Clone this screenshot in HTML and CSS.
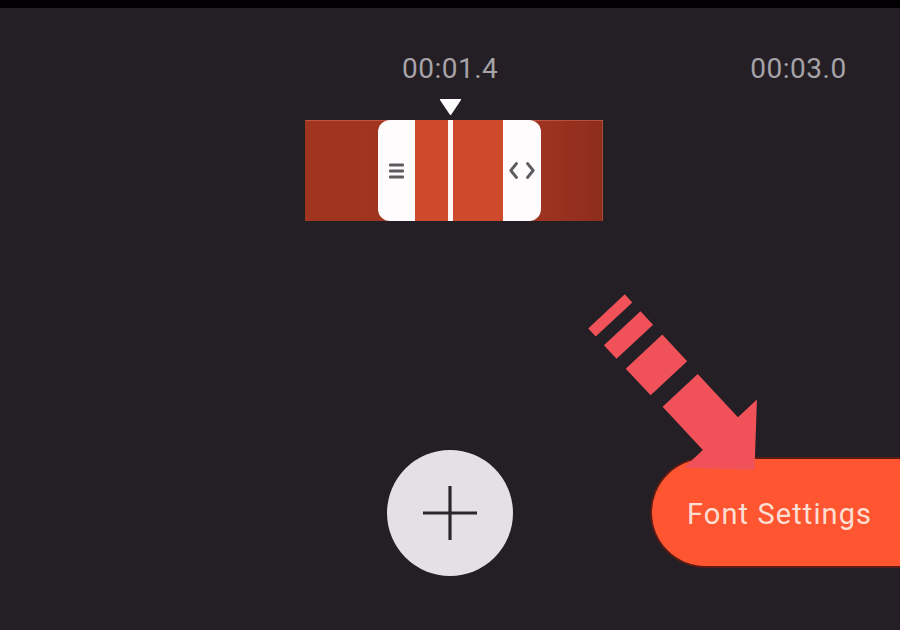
FILE: index.html
```html
<!DOCTYPE html>
<html lang="en">
<head>
<meta charset="utf-8">
<title>Text timeline</title>
<link rel="stylesheet" href="styles.css">
</head>
<body>
<div class="screen">
  <div class="statusbar"></div>
  <div class="ruler">
    <span class="time">00:01.4</span>
    <span class="time">00:03.0</span>
  </div>
  <svg class="marker" viewBox="0 0 23 18" width="23" height="18" aria-hidden="true">
    <path d="M1.5 1 L21.5 1 Q22.5 1 22 2 L12.3 16.6 Q11.5 17.6 10.7 16.6 L1 2 Q0.5 1 1.5 1 Z" fill="#fdfcfd"/>
  </svg>
  <div class="strip">
    <div class="clip">
      <div class="handle handle-left">
        <svg viewBox="0 0 15 16" width="15" height="16" aria-hidden="true">
          <rect x="0" y="0.5" width="15" height="3" rx="1" fill="#5c5b60"/>
          <rect x="0" y="6.5" width="15" height="3" rx="1" fill="#5c5b60"/>
          <rect x="0" y="12.5" width="15" height="3" rx="1" fill="#5c5b60"/>
        </svg>
      </div>
      <div class="segment seg-a"></div>
      <div class="cursor"></div>
      <div class="segment seg-b"></div>
      <div class="handle handle-right">
        <svg viewBox="0 0 26 17" width="26" height="17" aria-hidden="true">
          <polyline points="7.5,1.5 1.8,8.5 7.5,15.5" fill="none" stroke="#5c5b60" stroke-width="2.8" stroke-linecap="round" stroke-linejoin="round"/>
          <polyline points="18.5,1.5 24.2,8.5 18.5,15.5" fill="none" stroke="#5c5b60" stroke-width="2.8" stroke-linecap="round" stroke-linejoin="round"/>
        </svg>
      </div>
    </div>
  </div>
  <div class="actions">
    <button class="add" type="button" aria-label="Add">
      <svg viewBox="0 0 54 54" width="54" height="54" aria-hidden="true">
        <line x1="0.5" y1="27" x2="53.5" y2="27" stroke="#2b262b" stroke-width="3.2" stroke-linecap="round"/>
        <line x1="27" y1="0.5" x2="27" y2="53.5" stroke="#2b262b" stroke-width="3.2" stroke-linecap="round"/>
      </svg>
    </button>
    <button class="font-settings" type="button">Font Settings</button>
  </div>
  <svg class="pointer" viewBox="0 0 900 630" width="900" height="630" aria-hidden="true">
    <g transform="translate(606.5 311.4) rotate(47)" fill="#f15159">
      <rect x="0" y="-25" width="11" height="50"/>
      <rect x="23" y="-25" width="18.5" height="50"/>
      <rect x="55" y="-25" width="36.5" height="50"/>
      <polygon points="108,-24 167,-24 167,-50 217,0 167,50 167,24 108,24"/>
    </g>
  </svg>
</div>
</body>
</html>
```

FILE: styles.css
```css
html, body {
  margin: 0;
  padding: 0;
  background: #231f24;
}

body {
  width: 900px;
  height: 630px;
  overflow: hidden;
  font-family: Roboto, "Liberation Sans", sans-serif;
}

.screen {
  position: relative;
  width: 900px;
  height: 630px;
  overflow: hidden;
  background: #231f24;
}

.statusbar {
  height: 8px;
  background: #020002;
}

.ruler {
  display: flex;
  gap: 252px;
  padding-left: 402px;
  margin-top: 45px;
  height: 32px;
}

.time {
  font-size: 28px;
  line-height: 32px;
  letter-spacing: 0.5px;
  color: #a6a2a7;
  white-space: nowrap;
}

.marker {
  display: block;
  margin: 13px 0 0 439px;
}

.strip {
  width: 298px;
  height: 101px;
  margin: 4px 0 0 305px;
  box-sizing: border-box;
  background: linear-gradient(to right, #a0351f 0%, #9d3320 80%, #8d2d1c 100%);
  box-shadow: inset 0 1px 0 rgba(230, 120, 95, 0.45), inset -1px 0 0 rgba(230, 120, 95, 0.35);
  padding-left: 73px;
  display: flex;
}

.clip {
  display: flex;
  height: 101px;
}

.handle {
  background: #fefcfd;
  display: flex;
  align-items: center;
  justify-content: center;
}

.handle-left {
  width: 37px;
  border-radius: 12px 0 0 12px;
}

.handle-right {
  width: 38px;
  border-radius: 0 12px 12px 0;
}

.segment {
  background: #cf4a2c;
}

.seg-a {
  width: 33px;
}

.seg-b {
  width: 50px;
}

.cursor {
  width: 5px;
  background: #fdf6f4;
}

.actions {
  display: flex;
  align-items: center;
  margin-top: 229px;
  padding-left: 387px;
}

.add {
  width: 126px;
  height: 126px;
  border: 0;
  padding: 0;
  border-radius: 50%;
  background: #e5e0e6;
  display: flex;
  align-items: center;
  justify-content: center;
  flex: none;
}

.font-settings {
  margin-left: 137px;
  margin-top: -1px;
  width: 290px;
  height: 111px;
  flex: none;
  box-sizing: border-box;
  border: 2px solid #5a1c14;
  border-right: 0;
  border-radius: 56px 0 0 56px;
  background: #ff5631;
  color: #fcded3;
  font-family: Roboto, "Liberation Sans", sans-serif;
  font-size: 29px;
  letter-spacing: 1.1px;
  text-align: left;
  padding: 3px 0 0 35px;
}

.pointer {
  position: absolute;
  left: 0;
  top: 0;
  pointer-events: none;
}
```
